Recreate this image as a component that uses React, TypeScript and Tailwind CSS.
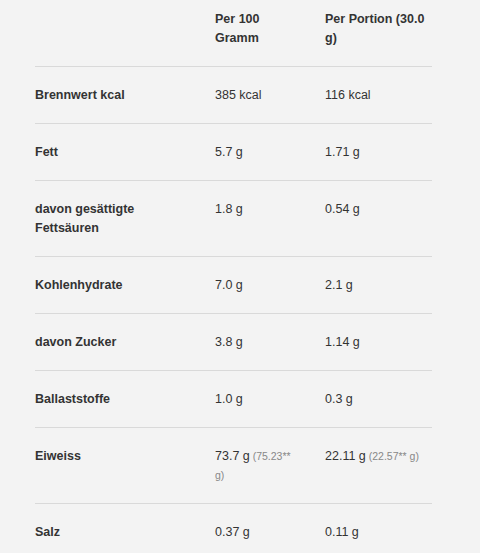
const rows: { label: string; per100: string; per100Extra?: string; portion: string; portionExtra?: string }[] = [
  { label: "Brennwert kcal", per100: "385 kcal", portion: "116 kcal" },
  { label: "Fett", per100: "5.7 g", portion: "1.71 g" },
  { label: "davon gesättigte Fettsäuren", per100: "1.8 g", portion: "0.54 g" },
  { label: "Kohlenhydrate", per100: "7.0 g", portion: "2.1 g" },
  { label: "davon Zucker", per100: "3.8 g", portion: "1.14 g" },
  { label: "Ballaststoffe", per100: "1.0 g", portion: "0.3 g" },
  { label: "Eiweiss", per100: "73.7 g", per100Extra: "(75.23** g)", portion: "22.11 g", portionExtra: "(22.57** g)" },
  { label: "Salz", per100: "0.37 g", portion: "0.11 g" },
];

export default function App() {
  return (
    <div
      className="min-h-[553px] bg-[#f3f3f3] px-[35px] text-[12.5px] leading-[19px] text-[#333]"
      style={{ fontFamily: '"Liberation Sans", Arial, sans-serif' }}
    >
      <div className="grid w-[397px] grid-cols-[180px_110px_107px] pt-[10px] pb-[18px] font-bold">
        <div className="pr-[40px]"></div>
        <div className="pr-[25px]">Per 100 Gramm</div>
        <div>Per Portion (30.0 g)</div>
      </div>
      {rows.map((r) => (
        <div
          key={r.label}
          className="grid w-[397px] grid-cols-[180px_110px_107px] border-t border-[#d9d9d9] pt-[19px] pb-[18px]"
        >
          <div className="pr-[40px] font-bold">{r.label}</div>
          <div className="pr-[25px]">
            {r.per100}
            {r.per100Extra && <span className="text-[10.5px] text-[#888]"> {r.per100Extra}</span>}
          </div>
          <div>
            {r.portion}
            {r.portionExtra && <span className="text-[10.5px] text-[#888]"> {r.portionExtra}</span>}
          </div>
        </div>
      ))}
    </div>
  );
}
